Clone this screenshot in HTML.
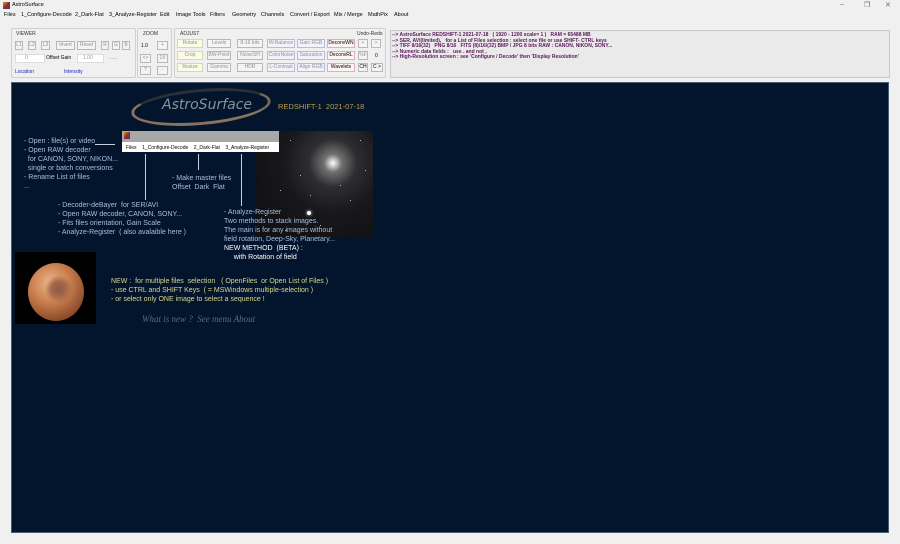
<!DOCTYPE html><html><head><style>
*{margin:0;padding:0;box-sizing:border-box}
body{width:900px;height:544px;background:#f0f0f0;font-family:"Liberation Sans",sans-serif;position:relative;overflow:hidden}
.a{position:absolute;white-space:nowrap}
.m{font-size:5.5px;color:#000;top:12px}
.b{position:absolute;height:9px;border:1px solid #b8b8b8;background:#f4f4f4;font-size:5px;color:#909090;text-align:center;line-height:7px}
.y{background:#fbfbe6;border-color:#d8d8b0}
.p{background:#f2f2fa;border-color:#b8b8e0}
.r{background:#fff4f4;border-color:#e0b0b0;color:#000}
.g{position:absolute;border:1px solid #d0d0d0;border-radius:2px}
.t{font-size:5px;color:#303030}
.d{font-size:7px;color:#a8bedc;line-height:9px}
.s{position:absolute;width:1px;height:1px;background:#bbb}
</style></head><body>
<div class="a" style="left:3px;top:2px;width:7px;height:7px;background:linear-gradient(135deg,#e09030,#903020 50%,#304080)"></div>
<div class="a" style="left:12px;top:2px;font-size:5.5px">AstroSurface</div>
<div class="a" style="left:840px;top:1px;font-size:7px;color:#666">–</div>
<div class="a" style="left:864px;top:1px;font-size:7px;color:#666">❐</div>
<div class="a" style="left:885px;top:1px;font-size:7px;color:#666">✕</div>
<div class="a m" style="left:4px">Files</div><div class="a m" style="left:21px">1_Configure-Decode</div><div class="a m" style="left:75px">2_Dark-Flat</div><div class="a m" style="left:109px">3_Analyze-Register</div><div class="a m" style="left:160px">Edit</div><div class="a m" style="left:176px">Image Tools</div><div class="a m" style="left:210px">Filters</div><div class="a m" style="left:232px">Geometry</div><div class="a m" style="left:261px">Channels</div><div class="a m" style="left:290px">Convert / Export</div><div class="a m" style="left:334px">Mix / Merge</div><div class="a m" style="left:368px">MathPix</div><div class="a m" style="left:394px">About</div>
<div class="g" style="left:11px;top:28px;width:125px;height:50px"></div>
<div class="g" style="left:137px;top:28px;width:35px;height:50px"></div>
<div class="g" style="left:174px;top:28px;width:212px;height:50px"></div>
<div class="a t" style="left:16px;top:31px">VIEWER</div><div class="a t" style="left:143px;top:31px">ZOOM</div><div class="a t" style="left:180px;top:31px">ADJUST</div><div class="a t" style="left:357px;top:31px">Undo-Redo</div>
<div class="b" style="left:15px;top:41px;width:8px">L1</div><div class="b" style="left:28px;top:41px;width:8px">L2</div><div class="b" style="left:41px;top:41px;width:9px">L3</div><div class="b" style="left:56px;top:41px;width:19px">Invert</div><div class="b" style="left:77px;top:41px;width:19px">Reset</div><div class="b" style="left:101px;top:41px;width:8px">R</div><div class="b" style="left:112px;top:41px;width:8px">G</div><div class="b" style="left:122px;top:41px;width:8px">B</div>
<div class="a" style="left:15px;top:54px;width:30px;height:9px;background:#fff;border:1px solid #ddd;font-size:5px;color:#999;padding-left:9px">0</div>
<div class="a t" style="left:46px;top:55px;color:#000">Offset  Gain</div>
<div class="a" style="left:77px;top:54px;width:27px;height:9px;background:#fff;border:1px solid #ddd;font-size:5px;color:#999;padding-left:5px">1.00</div>
<div class="a t" style="left:109px;top:55px;color:#66c">......</div>
<div class="a t" style="left:15px;top:69px;color:#2020c0">Location</div><div class="a t" style="left:64px;top:69px;color:#2020c0">Intensity</div>
<div class="a t" style="left:141px;top:43px;color:#000">1.0</div>
<div class="b" style="left:157px;top:41px;width:11px">+</div><div class="b" style="left:140px;top:54px;width:11px">&lt;&gt;</div><div class="b" style="left:157px;top:54px;width:11px">1X</div><div class="b" style="left:140px;top:66px;width:11px">?</div><div class="b" style="left:157px;top:66px;width:11px">-</div>
<div class="b y" style="left:177px;top:39px;width:26px">Rotate</div><div class="b" style="left:207px;top:39px;width:24px">Levels</div><div class="b" style="left:237px;top:39px;width:26px">8-16 bits</div><div class="b p" style="left:267px;top:39px;width:28px">W-Balance</div><div class="b p" style="left:297px;top:39px;width:28px">Gain RGB</div><div class="b r" style="left:327px;top:39px;width:28px">DeconvWN</div><div class="b" style="left:358px;top:39px;width:10px">&lt;</div><div class="b" style="left:371px;top:39px;width:10px">&gt;</div>
<div class="b y" style="left:177px;top:51px;width:26px">Crop</div><div class="b" style="left:207px;top:51px;width:24px">BW-Point</div><div class="b" style="left:237px;top:51px;width:26px">NoiseSH</div><div class="b p" style="left:267px;top:51px;width:28px">ColorNoise</div><div class="b p" style="left:297px;top:51px;width:28px">Saturation</div><div class="b r" style="left:327px;top:51px;width:28px">DeconvRL</div><div class="b" style="left:358px;top:51px;width:10px">%F</div><div class="a t" style="left:375px;top:53px;color:#000">0</div>
<div class="b y" style="left:177px;top:63px;width:26px">Resize</div><div class="b" style="left:207px;top:63px;width:24px">Gamma</div><div class="b" style="left:237px;top:63px;width:26px">HDR</div><div class="b p" style="left:267px;top:63px;width:28px">L-Contrast</div><div class="b p" style="left:297px;top:63px;width:28px">Align RGB</div><div class="b r" style="left:327px;top:63px;width:28px">Wavelets</div><div class="b" style="left:358px;top:63px;width:10px;color:#000">CH</div><div class="b" style="left:371px;top:63px;width:12px;color:#000">C &gt;</div>
<div class="a" style="left:390px;top:30px;width:500px;height:48px;border:1px solid #c8c8c8;background:#eaeaea"></div>
<div class="a" style="left:392px;top:33px;font-size:5px;line-height:5.6px;color:#5a1a5a;font-weight:bold">--&gt; AstroSurface REDSHIFT-1 2021-07-18 &nbsp; ( 1920 - 1200 scale= 1 ) &nbsp; RAM = 65488 MB<br>--&gt; SER, AVI(limited), &nbsp; for a List of Files selection : select one file or use SHIFT- CTRL keys<br>--&gt; TIFF 8/16(32) &nbsp; PNG 8/16 &nbsp; FITS (8)/16/(32) BMP / JPG 8 bits RAW : CANON, NIKON, SONY...<br>--&gt; Numeric data fields : &nbsp; use . and not ,<br>--&gt; High-Resolution screen : see 'Configure / Decode' then 'Display Resolution'</div>
<div class="a" style="left:11px;top:82px;width:878px;height:451px;background:#03152c;border:1px solid #4a5a70"></div>
<div class="a" style="left:131px;top:89px;width:140px;height:36px;border:3px solid #8a7260;border-radius:50%;transform:rotate(-5deg);border-top-color:#2a3038;border-right-color:#7a6658"></div>
<div class="a" style="left:162px;top:97px;font-size:14px;font-style:italic;color:#8a9098;font-family:'DejaVu Sans',sans-serif">AstroSurface</div>
<div class="a" style="left:278px;top:102px;font-size:7.5px;color:#b8a048">REDSHIFT-1 &nbsp;2021-07-18</div>
<div class="a" style="left:255px;top:131px;width:118px;height:107px;background:radial-gradient(circle at 66% 30%,#fff 0,#d0d0d0 3px,#707070 9px,#2e2e32 24px,#18181c 50px,#121215 80px)"></div>
<div class="s" style="left:270px;top:150px"></div><div class="s" style="left:290px;top:140px"></div><div class="s" style="left:280px;top:190px"></div><div class="s" style="left:300px;top:175px"></div><div class="s" style="left:350px;top:200px"></div><div class="s" style="left:360px;top:140px"></div><div class="s" style="left:320px;top:225px"></div><div class="s" style="left:265px;top:215px"></div><div class="s" style="left:340px;top:185px"></div><div class="s" style="left:365px;top:170px"></div><div class="s" style="left:310px;top:195px"></div><div class="s" style="left:285px;top:230px"></div>
<div class="a" style="left:307px;top:211px;width:4px;height:4px;border-radius:50%;background:#fff;box-shadow:0 0 3px #fff"></div>
<div class="a" style="left:122px;top:131px;width:157px;height:11px;background:#a8a8a8"></div>
<div class="a" style="left:124px;top:132px;width:6px;height:7px;background:linear-gradient(135deg,#e09030,#903020 50%,#304080)"></div>
<div class="a" style="left:122px;top:142px;width:157px;height:10px;background:#fff;font-size:5px;color:#000;padding:3px 0 0 4px">Files &nbsp;&nbsp; 1_Configure-Decode &nbsp;&nbsp; 2_Dark-Flat &nbsp;&nbsp; 3_Analyze-Register</div>
<div class="a" style="left:95px;top:144px;width:20px;height:1px;background:#c8d0e0"></div>
<div class="a" style="left:145px;top:154px;width:1px;height:46px;background:#c8d0e0"></div>
<div class="a" style="left:198px;top:154px;width:1px;height:16px;background:#c8d0e0"></div>
<div class="a" style="left:241px;top:154px;width:1px;height:52px;background:#c8d0e0"></div>
<div class="a d" style="left:24px;top:137px">- Open : file(s) or video<br>- Open RAW decoder<br>&nbsp;&nbsp;for CANON, SONY, NIKON...<br>&nbsp;&nbsp;single or batch conversions<br>- Rename List of files<br>...</div>
<div class="a d" style="left:172px;top:174px">- Make master files<br>Offset &nbsp;Dark &nbsp;Flat</div>
<div class="a d" style="left:58px;top:201px">- Decoder-deBayer &nbsp;for SER/AVI<br>- Open RAW decoder, CANON, SONY...<br>- Fits files orientation, Gain Scale<br>- Analyze-Register &nbsp;( also avalaible here )</div>
<div class="a d" style="left:224px;top:208px">- Analyze-Register<br>Two methods to stack images.<br>The main is for any images without<br>field rotation, Deep-Sky, Planetary...<br><span style="color:#fff">NEW METHOD &nbsp;(BETA) :<br>&nbsp;&nbsp;&nbsp;&nbsp;&nbsp;with Rotation of field</span></div>
<div class="a" style="left:15px;top:252px;width:81px;height:72px;background:#000"></div>
<div class="a" style="left:28px;top:263px;width:56px;height:58px;border-radius:50%;background:radial-gradient(circle at 55% 45%,#8a5a48 0,#a86a48 8px,transparent 14px),radial-gradient(circle at 40% 35%,#ecb890,#c87c4c 40%,#8a4a2a 75%,#3a1a10)"></div>
<div class="a d" style="left:111px;top:277px;color:#d8d890">NEW : &nbsp;for multiple files &nbsp;selection &nbsp;&nbsp;( OpenFiles &nbsp;or Open List of Files )<br>- use CTRL and SHIFT Keys &nbsp;( = MSWindows multiple-selection )<br>- or select only ONE image to select a sequence !</div>
<div class="a" style="left:142px;top:314px;font-size:9px;font-style:italic;color:#4a6e90;font-family:'Liberation Serif',serif">What is new ? &nbsp;See menu About</div>
</body></html>
